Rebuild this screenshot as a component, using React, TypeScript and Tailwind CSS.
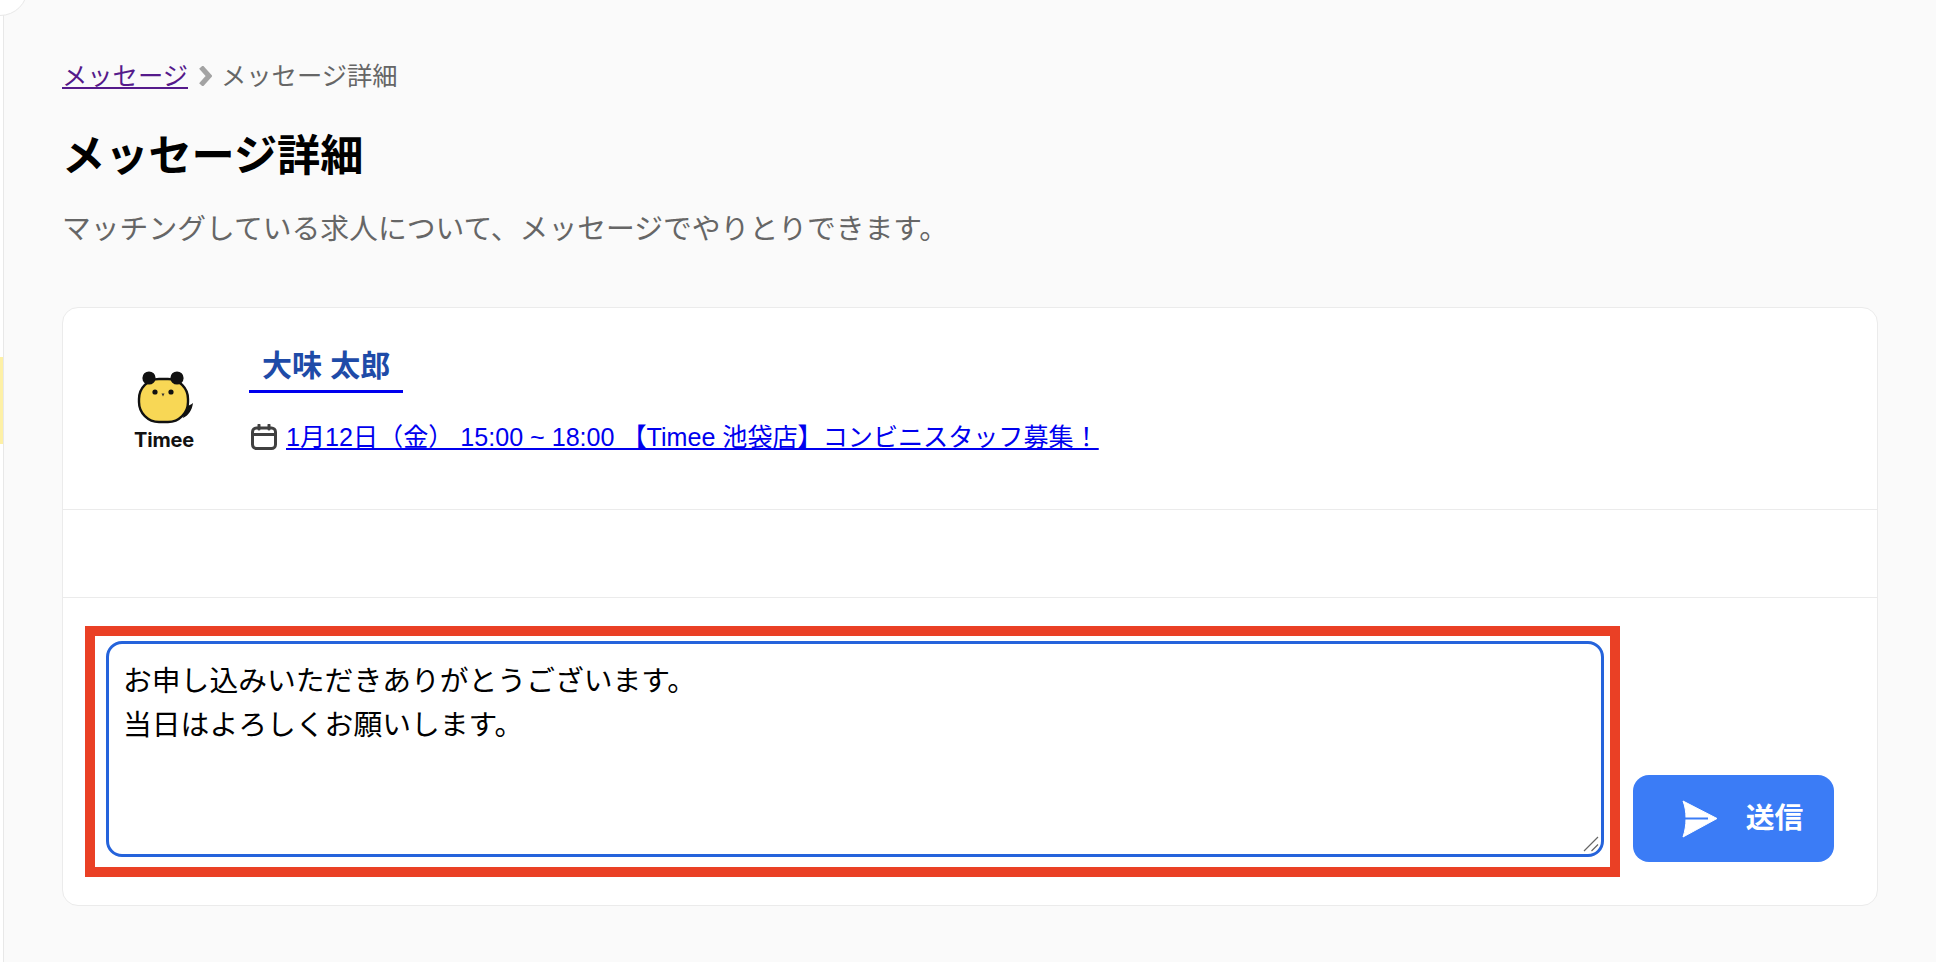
const font = "font-['Liberation_Sans','Noto_Sans_CJK_JP',sans-serif]";

function TimeeLogo() {
  return (
    <div className="flex w-[76px] flex-col items-center">
      <svg width="60" height="54" viewBox="0 0 60 54">
        <path d="M50 35 C53 35 56 34 58 32 C57 39 54 44 48 47 Z" fill="#111" />
        <rect x="4" y="8" width="49" height="43" rx="20" fill="#f8d755" stroke="#111" strokeWidth="2.4" />
        <circle cx="14" cy="7" r="6.6" fill="#111" />
        <circle cx="42" cy="7" r="6.6" fill="#111" />
        <circle cx="20" cy="21" r="2.6" fill="#111" />
        <circle cx="36" cy="21" r="2.6" fill="#111" />
        <path d="M26.5 22.5 L29.5 22.5 L28 25.5 Z" fill="#333" />
      </svg>
      <span className="mt-[3px] mr-[2px] font-['Inter',sans-serif] text-[20px] leading-[24px] font-bold tracking-[-0.2px] text-[#111]">
        Timee
      </span>
    </div>
  );
}

function CalendarIcon() {
  return (
    <svg width="26" height="26" viewBox="0 0 26 26" className="mr-[9px] ml-[2px] shrink-0" fill="none" stroke="#404040" strokeWidth="3">
      <rect x="1.5" y="4" width="23" height="20.5" rx="4" />
      <path d="M1.5 10.5 H24.5" />
      <path d="M8 1 V5 M18 1 V5" strokeLinecap="round" />
    </svg>
  );
}

export default function App() {
  return (
    <div className={`${font} relative flex min-h-screen overflow-hidden bg-[#fafafa]`}>
      {/* サイドバーの端 */}
      <div className="absolute top-[-40px] left-[-28px] z-10 h-[56px] w-[56px] rounded-full border border-[#e8e8e8] bg-white" />
      <div className="absolute top-[357px] left-0 h-[87px] w-[3px] bg-[#fdf0a6]" />

      <div className="w-[3px] shrink-0 bg-white" />
      <main className="flex-1 border-l border-[#e8e8e8] pt-[60px] pr-[58px] pl-[58px]">
        <nav className="flex h-[32px] items-center text-[25.3px] leading-[32px] text-[#666]">
          <a className="text-[#551a8b] underline" href="#">メッセージ</a>
          <svg width="14" height="20" viewBox="0 0 14 20" className="mr-[9px] ml-[10px]">
            <path d="M3 1 L11 10 L3 19" fill="none" stroke="#a3a3a3" strokeWidth="5" />
          </svg>
          <span>メッセージ詳細</span>
        </nav>

        <h1 className="mt-[34px] text-[43.2px] leading-[60px] font-bold text-black">メッセージ詳細</h1>
        <p className="mt-[23px] text-[28.8px] leading-[40px] text-[#666]">
          マッチングしている求人について、メッセージでやりとりできます。
        </p>

        <section className="mt-[58px] rounded-[16px] border border-[#ebebeb] bg-white">
          <div className="flex h-[202px] border-b border-[#ebebeb]">
            <div className="ml-[64px] pt-[63px]">
              <TimeeLogo />
            </div>
            <div className="ml-[46px] pt-[36px]">
              <a className="block w-[154px] border-b-[3px] border-[#0000ee] pb-[2px] pl-[13px] text-[30px] leading-[44px] font-bold text-[#1e4ba8]" href="#">
                大味 太郎
              </a>
              <div className="mt-[26px] flex items-center">
                <CalendarIcon />
                <a className="text-[25.1px] leading-[36px] text-[#0000ee] underline" href="#">
                  1月12日（金） 15:00 ~ 18:00 【Timee 池袋店】コンビニスタッフ募集！
                </a>
              </div>
            </div>
          </div>

          <div className="h-[88px] border-b border-[#ebebeb]" />

          <div className="flex items-end pt-[28px] pr-[43px] pb-[28px] pl-[22px]">
            <div className="flex-1 border-[10px] border-[#ea4025] pt-[5px] pr-[6px] pb-[10px] pl-[11px]">
              <div className="relative">
                <textarea
                  className="block h-[216px] w-full resize-none rounded-[16px] border-[3px] border-[#2563db] bg-white px-[14px] py-[15px] text-[28.8px] leading-[44px] text-black outline-none"
                  defaultValue={'お申し込みいただきありがとうございます。\n当日はよろしくお願いします。'}
                />
                <svg width="16" height="16" viewBox="0 0 16 16" className="absolute right-[5px] bottom-[5px]" fill="none" stroke="#666" strokeWidth="1.2">
                  <path d="M1 15 L15 1 M8.5 15 L15 8.5" />
                </svg>
              </div>
            </div>
            <button className="mb-[15px] ml-[13px] flex h-[87px] w-[201px] items-center justify-center rounded-[16px] bg-[#3b7cf6] pl-[18px] text-[28.8px] font-bold text-white">
              <svg width="36" height="38" viewBox="0 0 36 38" className="mr-[28px]">
                <path d="M1 1 L35 18.5 L1 37 C3 31 4 25 4 18.5 C4 12 3 6 1 1 Z" fill="#fff" stroke="#fff" strokeWidth="1" strokeLinejoin="round" />
                <path d="M3 18.5 H26" stroke="#3b7cf6" strokeWidth="2" />
              </svg>
              送信
            </button>
          </div>
        </section>
      </main>
    </div>
  );
}
